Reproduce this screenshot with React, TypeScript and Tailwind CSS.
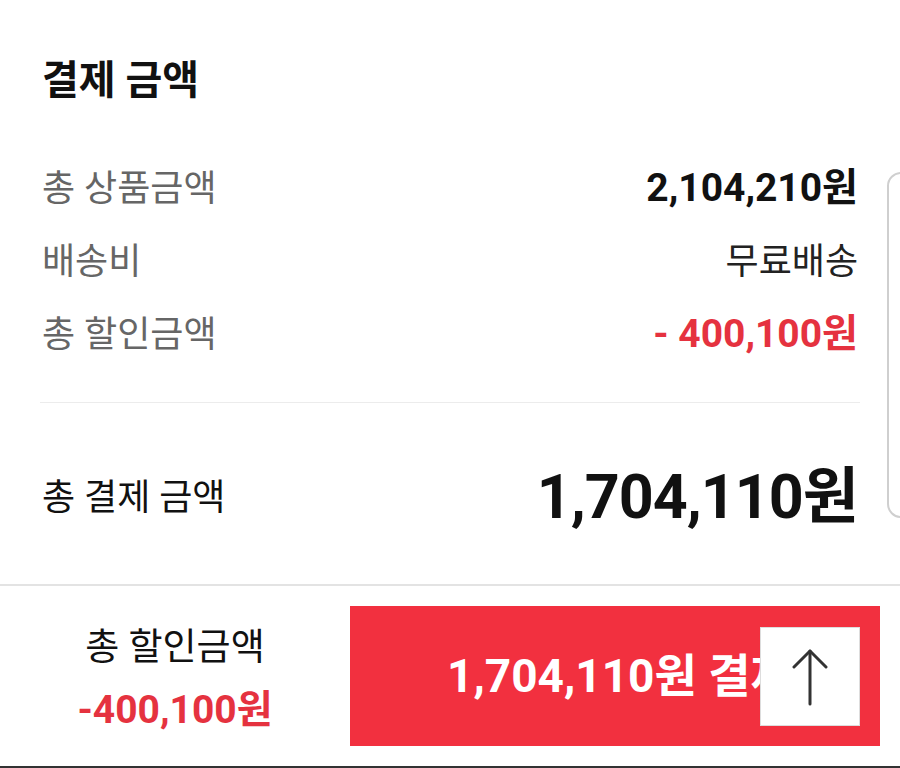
import React from "react";

const KR = "font-['Roboto','Noto_Sans_CJK_KR',sans-serif]";

function Row({ label, value, valueClass }: { label: string; value: string; valueClass: string }) {
  return (
    <div className="flex h-[73px] items-center justify-between">
      <span className="text-[36px] text-[#666]">{label}</span>
      <span className={valueClass}>{value}</span>
    </div>
  );
}

export default function App() {
  return (
    <div className={`${KR} relative h-[768px] w-[900px] overflow-hidden bg-white`}>
      {/* 결제 금액 summary */}
      <div className="px-[42px] pt-[58px]">
        <h1 className="text-[40px] font-bold leading-[46px] text-[#111]">결제 금액</h1>

        <div className="mt-[48px]">
          <Row label="총 상품금액" value="2,104,210원" valueClass="text-[39px] font-bold text-[#111]" />
          <Row label="배송비" value="무료배송" valueClass="text-[36px] text-[#222]" />
          <Row label="총 할인금액" value="- 400,100원" valueClass="text-[39px] font-bold text-[#e5323f]" />
        </div>
      </div>

      <div className="mx-[40px] mt-[31px] h-px bg-[#ececec]" />

      <div className="mt-[35px] flex h-[120px] items-center justify-between px-[42px]">
        <span className="text-[36px] text-[#111]">총 결제 금액</span>
        <span className="text-[61px] font-bold tracking-[-1px] text-[#111]">1,704,110원</span>
      </div>

      {/* bottom bar */}
      <div className="mt-[26px] border-t-2 border-[#e3e3e3]">
        <div className="flex h-[180px] items-start">
          <div className="flex h-full w-[350px] flex-col items-center justify-center pt-[6px]">
            <span className="text-[37px] leading-[44px] text-[#111]">총 할인금액</span>
            <span className="mt-[18px] text-[39px] font-bold leading-[44px] text-[#e5323f]">-400,100원</span>
          </div>
          <button className="mt-[20px] flex h-[140px] w-[530px] items-center justify-center bg-[#f2303f] pl-[10px]">
            <span className="whitespace-nowrap text-[46px] font-bold text-white">1,704,110원 결제</span>
          </button>
        </div>
        <div className="h-[2px] bg-[#333]" />
      </div>

      {/* scroll to top */}
      <div className="absolute left-[760px] top-[627px] flex h-[99px] w-[100px] items-center justify-center border border-[#ddd] bg-white">
        <svg width="36" height="58" viewBox="0 0 36 58" fill="none" stroke="#333" strokeWidth="3" strokeLinecap="round" strokeLinejoin="round">
          <path d="M18 3V56" />
          <path d="M2 19L18 3L34 19" />
        </svg>
      </div>

      {/* side card edge */}
      <div className="absolute left-[887px] top-[172px] h-[346px] w-[40px] rounded-[14px] border-2 border-[#cfcfcf] bg-white" />
    </div>
  );
}
